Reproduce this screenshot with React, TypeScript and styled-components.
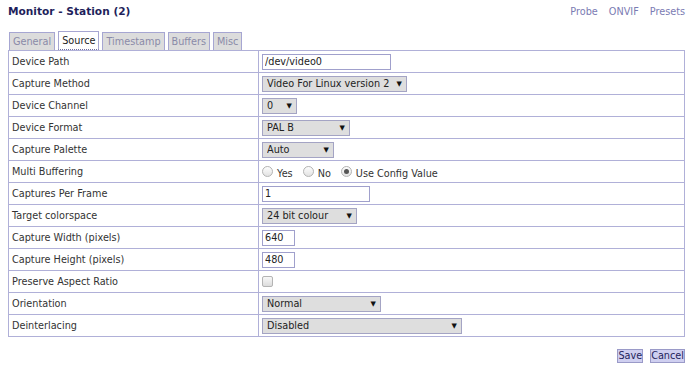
import React from "react";
import styled, { createGlobalStyle } from "styled-components";

const GlobalStyle = createGlobalStyle`
  html, body { margin: 0; padding: 0; background: #ffffff; }
  body { font-family: "DejaVu Sans", Verdana, sans-serif; font-size: 9.7px; color: #333333; }
`;

const Page = styled.div`
  width: 677px;
  padding: 5px 11px 0 8px;
`;

const Header = styled.div`
  display: flex;
  justify-content: space-between;
  align-items: baseline;
  margin-bottom: 14px;
`;

const Title = styled.h2`
  margin: 0;
  font-size: 10.6px;
  font-weight: bold;
  color: #1f1f5c;
  line-height: 12.3px;
`;

const Links = styled.div`
  display: flex;
  gap: 11px;
`;

const HeadLink = styled.a`
  color: #7b7bb3;
  text-decoration: none;
  font-size: 9.7px;
`;

const TabList = styled.div`
  display: flex;
  gap: 3px;
  padding-left: 1px;
  height: 19px;
  align-items: flex-end;
`;

const Tab = styled.div<{ $active?: boolean }>`
  height: 17px;
  display: flex;
  align-items: center;
  padding: 0 3px;
  border: 1px solid #a6a6d2;
  border-bottom: ${(p) => (p.$active ? "1px dotted #7070a0" : "none")};
  background: ${(p) => (p.$active ? "#ffffff" : "#dcdcdc")};
  color: ${(p) => (p.$active ? "#222222" : "#8a8aa8")};
  font-size: 9.7px;
`;

const Table = styled.table`
  width: 677px;
  border-collapse: collapse;
  border: 1px solid #a6a6d2;
`;

const Row = styled.tr`
  height: 22px;
`;

const LabelCell = styled.td`
  width: 243px;
  padding: 0 3px;
  border: 1px solid #b0b0d8;
  color: #333333;
  vertical-align: middle;
`;

const ValueCell = styled.td`
  padding: 0 3px;
  border: 1px solid #b0b0d8;
  vertical-align: middle;
`;

const TextInput = styled.input<{ $w: number }>`
  box-sizing: border-box;
  width: ${(p) => p.$w}px;
  height: 16px;
  border: 1px solid #a0a0cc;
  padding: 0 2px;
  font-family: "DejaVu Sans", Verdana, sans-serif;
  font-size: 9.7px;
  color: #222222;
  background: #ffffff;
  display: block;
  outline: none;
`;

const SelectWrap = styled.div<{ $w: number }>`
  position: relative;
  width: ${(p) => p.$w}px;
  height: 16px;
`;

const Select = styled.select`
  appearance: none;
  -webkit-appearance: none;
  box-sizing: border-box;
  width: 100%;
  height: 16px;
  border: 1px solid #a4a4c4;
  border-radius: 0;
  background: #dedede;
  padding: 0 12px 0 4px;
  font-family: "DejaVu Sans", Verdana, sans-serif;
  font-size: 9.7px;
  color: #222222;
  display: block;
  outline: none;
`;

const Arrow = styled.span`
  position: absolute;
  right: 5px;
  top: 3px;
  font-size: 7px;
  line-height: 10px;
  color: #111111;
  pointer-events: none;
`;

const RadioGroup = styled.div`
  display: flex;
  align-items: center;
  gap: 4px;
`;

const RadioLabel = styled.label`
  display: flex;
  align-items: center;
  gap: 4px;
  margin-right: 6px;
  color: #333333;
`;

const RadioText = styled.span`
  padding-top: 3px;
`;

const Radio = styled.input`
  appearance: none;
  -webkit-appearance: none;
  margin: 0;
  width: 11px;
  height: 11px;
  border-radius: 50%;
  border: 1px solid #b4b4b4;
  background: linear-gradient(#fdfdfd, #e2e2e2);
  box-sizing: border-box;
  display: grid;
  place-items: center;
  &:checked::after {
    content: "";
    width: 5px;
    height: 5px;
    border-radius: 50%;
    background: #555555;
  }
`;

const Checkbox = styled.input`
  appearance: none;
  -webkit-appearance: none;
  margin: 0;
  width: 11px;
  height: 11px;
  border-radius: 2px;
  border: 1px solid #b4b4b4;
  background: linear-gradient(#f8f8f8, #dcdcdc);
  box-sizing: border-box;
  display: block;
`;

const Footer = styled.div`
  display: flex;
  justify-content: flex-end;
  gap: 7px;
  margin-top: 12px;
`;

const Button = styled.button`
  height: 14px;
  padding: 0;
  border: 1px solid #9a9ac8;
  background: #cfcff0;
  color: #1f1f5c;
  font-family: "DejaVu Sans", Verdana, sans-serif;
  font-size: 9.7px;
  line-height: 12px;
`;

type Field =
  | { label: string; kind: "text"; value: string; w: number }
  | { label: string; kind: "select"; value: string; w: number }
  | { label: string; kind: "radio" }
  | { label: string; kind: "check" };

const fields: Field[] = [
  { label: "Device Path", kind: "text", value: "/dev/video0", w: 129 },
  { label: "Capture Method", kind: "select", value: "Video For Linux version 2", w: 145 },
  { label: "Device Channel", kind: "select", value: "0", w: 35 },
  { label: "Device Format", kind: "select", value: "PAL B", w: 88 },
  { label: "Capture Palette", kind: "select", value: "Auto", w: 72 },
  { label: "Multi Buffering", kind: "radio" },
  { label: "Captures Per Frame", kind: "text", value: "1", w: 108 },
  { label: "Target colorspace", kind: "select", value: "24 bit colour", w: 95 },
  { label: "Capture Width (pixels)", kind: "text", value: "640", w: 33 },
  { label: "Capture Height (pixels)", kind: "text", value: "480", w: 33 },
  { label: "Preserve Aspect Ratio", kind: "check" },
  { label: "Orientation", kind: "select", value: "Normal", w: 119 },
  { label: "Deinterlacing", kind: "select", value: "Disabled", w: 200 },
];

const tabs = ["General", "Source", "Timestamp", "Buffers", "Misc"];

function renderControl(f: Field) {
  switch (f.kind) {
    case "text":
      return <TextInput $w={f.w} defaultValue={f.value} />;
    case "select":
      return (
        <SelectWrap $w={f.w}>
          <Select defaultValue={f.value}>
            <option>{f.value}</option>
          </Select>
          <Arrow>▼</Arrow>
        </SelectWrap>
      );
    case "radio":
      return (
        <RadioGroup>
          <RadioLabel>
            <Radio type="radio" name="mb" />
            <RadioText>Yes</RadioText>
          </RadioLabel>
          <RadioLabel>
            <Radio type="radio" name="mb" />
            <RadioText>No</RadioText>
          </RadioLabel>
          <RadioLabel>
            <Radio type="radio" name="mb" defaultChecked />
            <RadioText>Use Config Value</RadioText>
          </RadioLabel>
        </RadioGroup>
      );
    case "check":
      return <Checkbox type="checkbox" />;
  }
}

export default function App() {
  return (
    <>
      <GlobalStyle />
      <Page>
        <Header>
          <Title>Monitor - Station (2)</Title>
          <Links>
            <HeadLink href="#">Probe</HeadLink>
            <HeadLink href="#">ONVIF</HeadLink>
            <HeadLink href="#">Presets</HeadLink>
          </Links>
        </Header>
        <TabList>
          {tabs.map((t) => (
            <Tab key={t} $active={t === "Source"}>
              {t}
            </Tab>
          ))}
        </TabList>
        <Table>
          <tbody>
            {fields.map((f) => (
              <Row key={f.label}>
                <LabelCell>{f.label}</LabelCell>
                <ValueCell>{renderControl(f)}</ValueCell>
              </Row>
            ))}
          </tbody>
        </Table>
        <Footer>
          <Button>Save</Button>
          <Button>Cancel</Button>
        </Footer>
      </Page>
    </>
  );
}
